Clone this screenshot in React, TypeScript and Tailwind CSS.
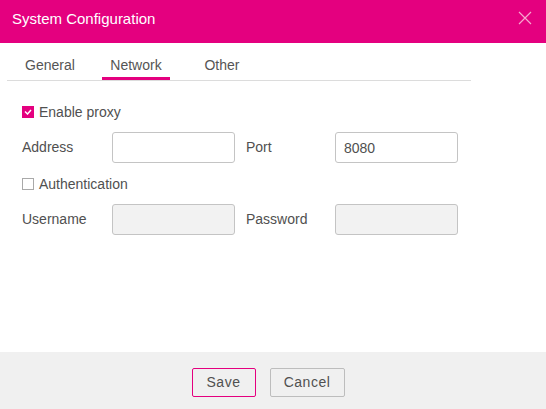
import { useState } from "react"

const Checkbox = ({ checked, label, onChange }: { checked: boolean; label: string; onChange: () => void }) => {
    return (
        <label className="flex items-center h-5 cursor-pointer select-none">
            <span className={`w-3 h-3 flex items-center justify-center ${checked ? "bg-[#e4007f] border border-[#e4007f]" : "bg-white border border-[#a9a9a9]"}`}>
                {checked && (
                    <svg width="8" height="6" viewBox="0 0 8 6" fill="none">
                        <path d="M1 2.5 L3.5 5 L7 1" stroke="white" strokeWidth="1.5" />
                    </svg>
                )}
            </span>
            <input type="checkbox" className="hidden" checked={checked} onChange={onChange} />
            <span className="ml-[5px] text-[14px] text-[#505050]">{label}</span>
        </label>
    )
}

const Field = ({ value, disabled }: { value?: string; disabled?: boolean }) => {
    return (
        <input
            defaultValue={value}
            disabled={disabled}
            className={`h-[31px] w-full rounded-[3px] border border-[#c4c4c4] px-[8px] text-[14px] text-[#505050] outline-none ${disabled ? "bg-[#f2f2f2]" : "bg-white"}`}
        />
    )
}

const App = () => {
    const [tab, setTab] = useState("Network")
    const [proxy, setProxy] = useState(true)
    const [auth, setAuth] = useState(false)

    return (
        <div className="w-[546px] h-[409px] flex flex-col bg-white overflow-hidden" style={{ fontFamily: '"Liberation Sans", Arial, sans-serif' }}>
            {/* header */}
            <div className="h-[43px] shrink-0 bg-[#e4007f] flex items-start justify-between pl-3 pr-[14px]">
                <h1 className="pt-[10px] text-[15px] leading-[18px] text-white">System Configuration</h1>
                <button className="mt-[11px]">
                    <svg width="14" height="14" viewBox="0 0 14 14" fill="none">
                        <path d="M1 1 L13 13 M13 1 L1 13" stroke="#f6a6cf" strokeWidth="1.2" />
                    </svg>
                </button>
            </div>

            {/* tabs */}
            <div className="ml-[7px] w-[464px] flex border-b border-[#dcdcdc]">
                {["General", "Network", "Other"].map((t) => (
                    <button key={t} onClick={() => setTab(t)} className="w-[86px] flex justify-center">
                        <span className={`pt-3 pb-[2px] px-[8px] text-[14px] leading-5 text-[#555] border-b-[3px] ${tab === t ? "border-[#e4007f]" : "border-transparent"}`}>{t}</span>
                    </button>
                ))}
            </div>

            {/* content */}
            <div className="flex-1 pl-[22px] pt-[21px] flex flex-col">
                <Checkbox checked={proxy} label="Enable proxy" onChange={() => setProxy(!proxy)} />
                <div className="mt-[10px] grid grid-cols-[90px_123px_100px_123px] items-center">
                    <span className="text-[14px] text-[#505050]">Address</span>
                    <Field />
                    <span className="text-[14px] text-[#505050] pl-[11px]">Port</span>
                    <Field value="8080" />
                </div>
                <div className="mt-[11px]">
                    <Checkbox checked={auth} label="Authentication" onChange={() => setAuth(!auth)} />
                </div>
                <div className="mt-[10px] grid grid-cols-[90px_123px_100px_123px] items-center">
                    <span className="text-[14px] text-[#505050]">Username</span>
                    <Field disabled={!auth} />
                    <span className="text-[14px] text-[#505050] pl-[11px]">Password</span>
                    <Field disabled={!auth} />
                </div>
            </div>

            {/* footer */}
            <div className="h-[57px] shrink-0 bg-[#f0f0f0] flex justify-center items-start pt-4 pr-[10px] gap-[14px]">
                <button className="h-[29px] w-[64px] border border-[#e4007f] rounded-[2px] text-[14px] text-[#505050] tracking-[0.5px]">Save</button>
                <button className="h-[29px] w-[75px] border border-[#bdbdbd] rounded-[2px] text-[14px] text-[#505050] tracking-[0.5px]">Cancel</button>
            </div>
        </div>
    )
}

export default App
